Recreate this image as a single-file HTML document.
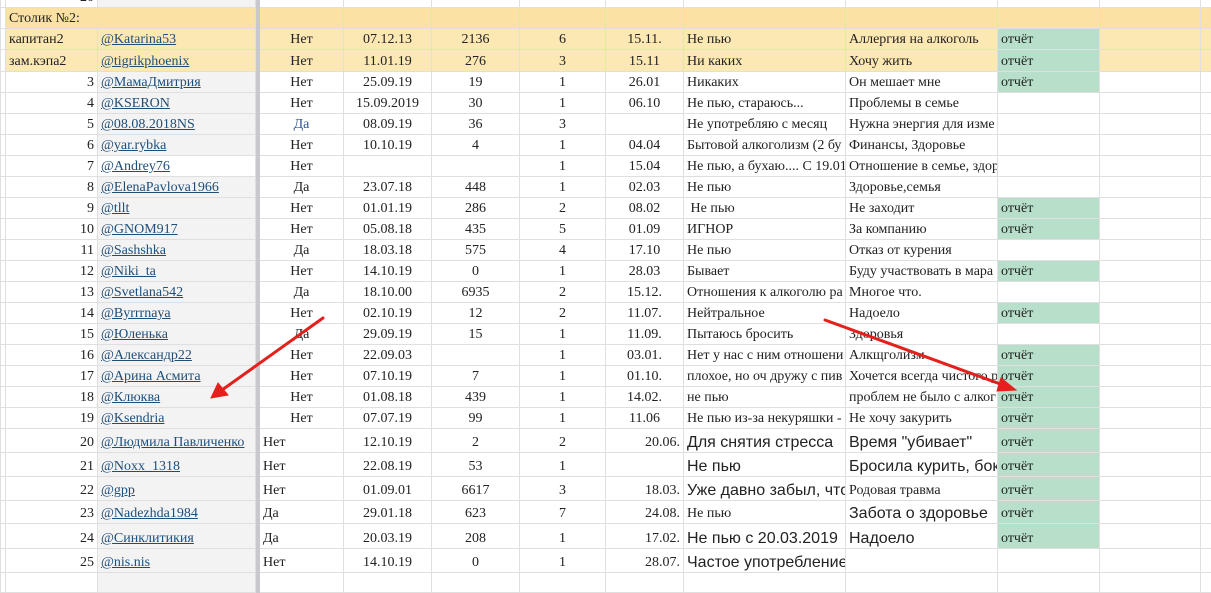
<!DOCTYPE html>
<html><head><meta charset="utf-8"><style>
body{margin:0;width:1211px;height:575px;overflow:hidden;background:#fff;position:relative;font-family:"Liberation Serif","DejaVu Serif",serif;}
table{border-collapse:collapse;table-layout:fixed;position:absolute;left:0;top:-14px;width:1220px;}
td{border:1px solid #dfdfdf;padding:0 3px 1px 3px;white-space:nowrap;overflow:hidden;font-size:14px;color:#222;vertical-align:bottom;line-height:16px;}
td.s{background:#c9c9cd;border-color:#c9c9cd;padding:0}
td.b{background:#f3f3f3}
td.c{text-align:center}
td.r{text-align:right}
a{color:#1f4e79;text-decoration:underline}
tr.y td{background:#fce8b2}
tr.h td{background:#fbe2a4}
tr.y td.s,tr.h td.s{background:#c9c9cd}
td.g{background:#b7dfc9 !important}
.sn{font-family:"Liberation Sans","DejaVu Sans",sans-serif;font-size:16px}
.blue{color:#2f5597}
</style></head><body>
<table>
<colgroup><col style="width:5px"><col style="width:92px"><col style="width:158px"><col style="width:4px"><col style="width:84px"><col style="width:88px"><col style="width:88px"><col style="width:86px"><col style="width:78px"><col style="width:162px"><col style="width:152px"><col style="width:102px"><col style="width:101px"><col style="width:20px"></colgroup>
<tr style="height:21px"><td></td><td class="r">20</td><td class="b"></td><td class="s"></td><td></td><td></td><td></td><td></td><td></td><td></td><td></td><td></td><td></td><td></td></tr>
<tr class="h" style="height:21px"><td style="background:#fff"></td><td colspan="2">Столик №2:</td><td class="s"></td><td></td><td></td><td></td><td></td><td></td><td></td><td></td><td></td><td></td><td></td></tr>
<tr class="y" style="height:21px"><td style="background:#fff"></td><td>капитан2</td><td><a>@Katarina53 </a></td><td class="s"></td><td class="c">Нет</td><td class="c">07.12.13</td><td class="c">2136</td><td class="c">6</td><td class="c">15.11.</td><td>Не пью</td><td>Аллергия на алкоголь</td><td class="g">отчёт</td><td></td><td></td></tr>
<tr class="y" style="height:22px"><td style="background:#fff"></td><td>зам.кэпа2</td><td><a>@tigrikphoenix </a></td><td class="s"></td><td class="c">Нет</td><td class="c">11.01.19</td><td class="c">276</td><td class="c">3</td><td class="c">15.11</td><td>Ни каких</td><td>Хочу жить</td><td class="g">отчёт</td><td></td><td></td></tr>
<tr style="height:21px"><td></td><td class="r">3</td><td class="b"><a>@МамаДмитрия </a></td><td class="s"></td><td class="c">Нет</td><td class="c">25.09.19</td><td class="c">19</td><td class="c">1</td><td class="c">26.01</td><td>Никаких</td><td>Он мешает мне</td><td class="g">отчёт</td><td></td><td></td></tr>
<tr style="height:21px"><td></td><td class="r">4</td><td class="b"><a>@KSERON</a></td><td class="s"></td><td class="c">Нет</td><td class="c">15.09.2019</td><td class="c">30</td><td class="c">1</td><td class="c">06.10</td><td>Не пью, стараюсь...</td><td>Проблемы в семье</td><td></td><td></td><td></td></tr>
<tr style="height:21px"><td></td><td class="r">5</td><td class="b"><a>@08.08.2018NS</a></td><td class="s"></td><td class="c blue">Да</td><td class="c">08.09.19</td><td class="c">36</td><td class="c">3</td><td class="c"></td><td>Не употребляю с месяц</td><td>Нужна энергия для изме</td><td></td><td></td><td></td></tr>
<tr style="height:21px"><td></td><td class="r">6</td><td class="b"><a>@yar.rybka</a></td><td class="s"></td><td class="c">Нет</td><td class="c">10.10.19</td><td class="c">4</td><td class="c">1</td><td class="c">04.04</td><td>Бытовой алкоголизм (2 бу</td><td>Финансы, Здоровье</td><td></td><td></td><td></td></tr>
<tr style="height:21px"><td></td><td class="r">7</td><td><a>@Andrey76</a></td><td class="s"></td><td class="c">Нет</td><td class="c"></td><td class="c"></td><td class="c">1</td><td class="c">15.04</td><td>Не пью, а бухаю.... С 19.01</td><td>Отношение в семье, здор</td><td></td><td></td><td></td></tr>
<tr style="height:21px"><td></td><td class="r">8</td><td class="b"><a>@ElenaPavlova1966</a></td><td class="s"></td><td class="c">Да</td><td class="c">23.07.18</td><td class="c">448</td><td class="c">1</td><td class="c">02.03</td><td>Не пью</td><td>Здоровье,семья</td><td></td><td></td><td></td></tr>
<tr style="height:21px"><td></td><td class="r">9</td><td class="b"><a>@tllt </a></td><td class="s"></td><td class="c">Нет</td><td class="c">01.01.19</td><td class="c">286</td><td class="c">2</td><td class="c">08.02</td><td>&nbsp;Не пью</td><td>Не заходит</td><td class="g">отчёт</td><td></td><td></td></tr>
<tr style="height:21px"><td></td><td class="r">10</td><td class="b"><a>@GNOM917 </a></td><td class="s"></td><td class="c">Нет</td><td class="c">05.08.18</td><td class="c">435</td><td class="c">5</td><td class="c">01.09</td><td>ИГНОР</td><td>За компанию</td><td class="g">отчёт</td><td></td><td></td></tr>
<tr style="height:21px"><td></td><td class="r">11</td><td class="b"><a>@Sashshka </a></td><td class="s"></td><td class="c">Да</td><td class="c">18.03.18</td><td class="c">575</td><td class="c">4</td><td class="c">17.10</td><td>Не пью</td><td>Отказ от курения</td><td></td><td></td><td></td></tr>
<tr style="height:21px"><td></td><td class="r">12</td><td class="b"><a>@Niki_ta </a></td><td class="s"></td><td class="c">Нет</td><td class="c">14.10.19</td><td class="c">0</td><td class="c">1</td><td class="c">28.03</td><td>Бывает</td><td>Буду участвовать в мара</td><td class="g">отчёт</td><td></td><td></td></tr>
<tr style="height:21px"><td></td><td class="r">13</td><td class="b"><a>@Svetlana542 </a></td><td class="s"></td><td class="c">Да</td><td class="c">18.10.00</td><td class="c">6935</td><td class="c">2</td><td class="c">15.12.</td><td>Отношения к алкоголю ра</td><td>Многое что.</td><td></td><td></td><td></td></tr>
<tr style="height:21px"><td></td><td class="r">14</td><td class="b"><a>@Byrrrnaya</a></td><td class="s"></td><td class="c">Нет</td><td class="c">02.10.19</td><td class="c">12</td><td class="c">2</td><td class="c">11.07.</td><td>Нейтральное</td><td>Надоело</td><td class="g">отчёт</td><td></td><td></td></tr>
<tr style="height:21px"><td></td><td class="r">15</td><td class="b"><a>@Юленька </a></td><td class="s"></td><td class="c">Да</td><td class="c">29.09.19</td><td class="c">15</td><td class="c">1</td><td class="c">11.09.</td><td>Пытаюсь бросить</td><td>Здоровья</td><td></td><td></td><td></td></tr>
<tr style="height:21px"><td></td><td class="r">16</td><td class="b"><a>@Александр22 </a></td><td class="s"></td><td class="c">Нет</td><td class="c">22.09.03</td><td class="c"></td><td class="c">1</td><td class="c">03.01.</td><td>Нет у нас с ним отношени</td><td>Алкщголизм</td><td class="g">отчёт</td><td></td><td></td></tr>
<tr style="height:21px"><td></td><td class="r">17</td><td class="b"><a>@Арина Асмита</a></td><td class="s"></td><td class="c">Нет</td><td class="c">07.10.19</td><td class="c">7</td><td class="c">1</td><td class="c">01.10.</td><td>плохое, но оч дружу с пив</td><td>Хочется всегда чистого р</td><td class="g">отчёт</td><td></td><td></td></tr>
<tr style="height:21px"><td></td><td class="r">18</td><td class="b"><a>@Клюква </a></td><td class="s"></td><td class="c">Нет</td><td class="c">01.08.18</td><td class="c">439</td><td class="c">1</td><td class="c">14.02.</td><td>не пью</td><td>проблем не было с алког</td><td class="g">отчёт</td><td></td><td></td></tr>
<tr style="height:21px"><td></td><td class="r">19</td><td class="b"><a>@Ksendria </a></td><td class="s"></td><td class="c">Нет</td><td class="c">07.07.19</td><td class="c">99</td><td class="c">1</td><td class="c">11.06</td><td>Не пью из-за некуряшки -</td><td>Не хочу закурить</td><td class="g">отчёт</td><td></td><td></td></tr>
<tr style="height:24px"><td></td><td class="r">20</td><td class="b"><a>@Людмила Павличенко </a></td><td class="s"></td><td>Нет</td><td class="c">12.10.19</td><td class="c">2</td><td class="c">2</td><td class="r">20.06.</td><td class="sn">Для снятия стресса</td><td class="sn">Время "убивает"</td><td class="g">отчёт</td><td></td><td></td></tr>
<tr style="height:24px"><td></td><td class="r">21</td><td class="b"><a>@Noxx_1318 </a></td><td class="s"></td><td>Нет</td><td class="c">22.08.19</td><td class="c">53</td><td class="c">1</td><td class="r"></td><td class="sn">Не пью</td><td class="sn">Бросила курить, бок</td><td class="g">отчёт</td><td></td><td></td></tr>
<tr style="height:24px"><td></td><td class="r">22</td><td class="b"><a>@gpp </a></td><td class="s"></td><td>Нет</td><td class="c">01.09.01</td><td class="c">6617</td><td class="c">3</td><td class="r">18.03.</td><td class="sn">Уже давно забыл, что</td><td>Родовая травма</td><td class="g">отчёт</td><td></td><td></td></tr>
<tr style="height:23px"><td></td><td class="r">23</td><td class="b"><a>@Nadezhda1984 </a></td><td class="s"></td><td>Да</td><td class="c">29.01.18</td><td class="c">623</td><td class="c">7</td><td class="r">24.08.</td><td>Не пью</td><td class="sn">Забота о здоровье</td><td class="g">отчёт</td><td></td><td></td></tr>
<tr style="height:25px"><td></td><td class="r">24</td><td class="b"><a>@Синклитикия </a></td><td class="s"></td><td>Да</td><td class="c">20.03.19</td><td class="c">208</td><td class="c">1</td><td class="r">17.02.</td><td class="sn">Не пью с 20.03.2019</td><td class="sn">Надоело</td><td class="g">отчёт</td><td></td><td></td></tr>
<tr style="height:24px"><td></td><td class="r">25</td><td class="b"><a>@nis.nis</a></td><td class="s"></td><td>Нет</td><td class="c">14.10.19</td><td class="c">0</td><td class="c">1</td><td class="r">28.07.</td><td class="sn">Частое употребление</td><td></td><td></td><td></td><td></td></tr>
<tr style="height:20px"><td></td><td></td><td class="b"></td><td class="s"></td><td></td><td></td><td></td><td></td><td></td><td></td><td></td><td></td><td></td><td></td></tr>
</table>
<svg width="1211" height="575" style="position:absolute;left:0;top:0">
<g stroke="#e3201b" stroke-width="3" fill="#e3201b" stroke-linecap="round">
<line x1="323" y1="318" x2="222" y2="390"/>
<polygon points="211,398 218,383 228,395" stroke-width="1"/>
<line x1="825" y1="320" x2="1003" y2="385"/>
<polygon points="1016,390 1001,378 997,391" stroke-width="1"/>
</g>
</svg>
</body></html>
